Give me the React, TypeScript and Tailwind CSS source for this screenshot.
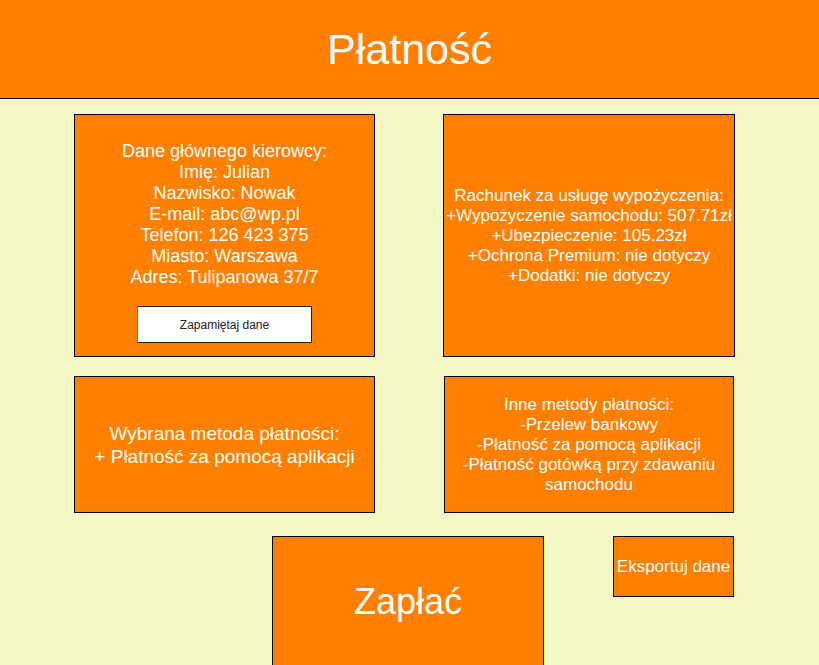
export default function App() {
  const font = { fontFamily: '"Liberation Sans", Arial, sans-serif' };
  return (
    <div className="min-h-[665px] w-full bg-[#F5F7C6] text-white" style={font}>
      <header className="box-border flex h-[99px] items-center justify-center border-b border-black bg-[#FF8000]">
        <h1 className="text-[43px] leading-none font-normal">Płatność</h1>
      </header>

      <div className="mt-[15px] flex">
        <section className="ml-[74px] box-border flex h-[243px] w-[301px] flex-col items-center border border-black bg-[#FF8000] pt-[26px]">
          <p className="text-center text-[18px] leading-[21px]">
            Dane głównego kierowcy:
            <br />
            Imię: Julian
            <br />
            Nazwisko: Nowak
            <br />
            E-mail: abc@wp.pl
            <br />
            Telefon: 126 423 375
            <br />
            Miasto: Warszawa
            <br />
            Adres: Tulipanowa 37/7
          </p>
          <button className="mt-[18px] box-border h-[37px] w-[175px] border border-t-[#222] border-l-[#777] border-r-[#222] border-b-[#222] bg-white text-[12px] text-[#222]">
            Zapamiętaj dane
          </button>
        </section>
        <section className="ml-[68px] box-border flex h-[243px] w-[292px] items-center justify-center border border-black bg-[#FF8000]">
          <p className="text-center text-[17px] leading-[20px] whitespace-nowrap">
            Rachunek za usługę wypożyczenia:
            <br />
            +Wypożyczenie samochodu: 507.71zł
            <br />
            +Ubezpieczenie: 105.23zł
            <br />
            +Ochrona Premium: nie dotyczy
            <br />
            +Dodatki: nie dotyczy
          </p>
        </section>
      </div>

      <div className="mt-[19px] flex">
        <section className="ml-[74px] box-border flex h-[137px] w-[301px] items-center justify-center border border-black bg-[#FF8000]">
          <p className="text-center text-[19px] leading-[23px]">
            Wybrana metoda płatności:
            <br />+ Płatność za pomocą aplikacji
          </p>
        </section>
        <section className="ml-[69px] box-border flex h-[137px] w-[290px] items-center justify-center border border-black bg-[#FF8000] px-2">
          <p className="text-center text-[17px] leading-[20px]">
            Inne metody płatności:
            <br />
            -Przelew bankowy
            <br />
            -Płatność za pomocą aplikacji
            <br />
            -Płatność gotówką przy zdawaniu samochodu
          </p>
        </section>
      </div>

      <div className="mt-[23px] flex items-start">
        <button className="ml-[272px] box-border flex h-[131px] w-[272px] items-center justify-center border border-black bg-[#FF8000] text-[36px] text-white">
          Zapłać
        </button>
        <button className="ml-[69px] box-border flex h-[61px] w-[121px] items-center justify-center border border-black bg-[#FF8000] text-[17px] whitespace-nowrap text-white">
          Eksportuj dane
        </button>
      </div>
    </div>
  );
}
